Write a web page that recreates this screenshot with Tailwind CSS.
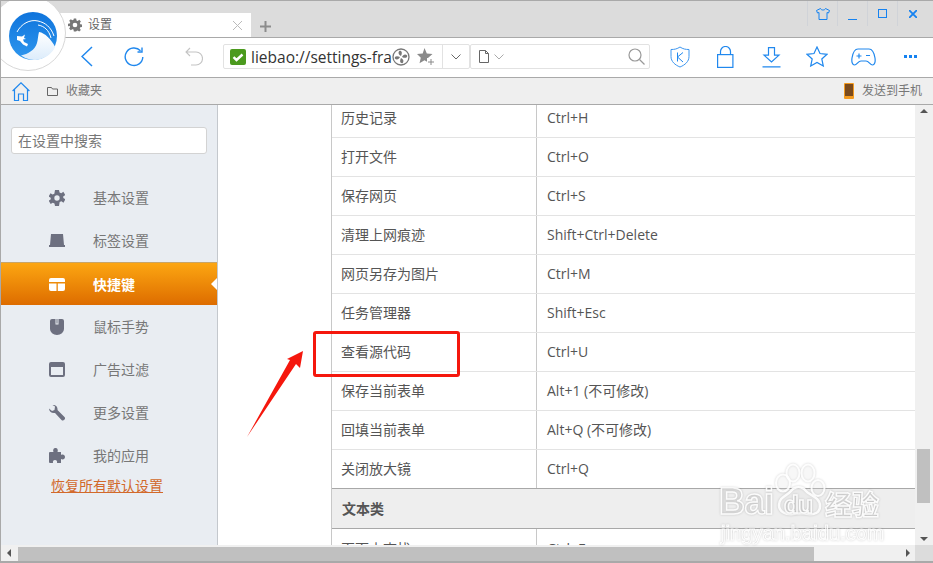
<!DOCTYPE html>
<html lang="zh"><head><meta charset="utf-8"><script src="https://cdn.jsdelivr.net/npm/@tailwindcss/browser@4"></script></head>
<body class="m-0 bg-white">
<div class="relative w-[933px] h-[563px] overflow-hidden flex flex-col border border-[#a9a9a9] border-r-0 border-b-2 text-[14px] text-[#555] font-['Open_Sans','Noto_Sans_CJK_SC',sans-serif]">
  <!-- tab strip -->
  <div class="h-[36px] shrink-0 bg-[#dcdcdc] flex items-end pl-[59px] relative">
    <div class="w-[191px] h-[24px] bg-white flex items-center pl-[8px] pr-[9px] gap-[6px] text-[#666] text-[12px]">
      <svg class="w-[14px] h-[14px]" viewBox="0 0 24 24" fill="#777"><path fill-rule="evenodd" d="M10 1h4l.6 3.200 2 .8L19.300 3.200l2.800 2.800-1.800 2.700.8 2 3 .6v4l-3.100.6-.8 2 1.800 2.600-2.800 2.800-2.700-1.800-2 .8L14 23h-4l-.6-3.100-2-.8-2.700 1.800-2.800-2.800 1.800-2.600-.8-2L0 14v-4l3-.6.8-2L2 4.800 4.800 2l2.700 1.800 2-.8zM12 8a4 4 0 100 8 4 4 0 000-8z"/></svg>
      <span class="flex-1">设置</span>
      <svg class="w-[9px] h-[9px]" viewBox="0 0 9 9" stroke="#bbb" stroke-width="1" fill="none"><path d="M0 0l9 9M9 0L0 9"/></svg>
    </div>
    <svg class="w-[11px] h-[11px] ml-[9px] mb-[5px]" viewBox="0 0 11 11" fill="#8c8c8c"><path d="M4.500 0h2v4.500H11v2H6.500V11h-2V6.500H0v-2h4.500z"/></svg>
    <div class="ml-auto self-start h-[25px] flex pr-[6px]">
      <div class="w-[30px] border-l border-[#d0d3d8] flex items-center justify-center"><svg class="w-[14px] h-[12px]" viewBox="0 0 14 12" fill="none" stroke="#1582f0"><path d="M4.500.5L.5 2.500l1 2.500 1.500-.5v7h8v-7l1.500.5 1-2.500-4-2c-.5 2-4.500 2-5 0z"/></svg></div>
      <div class="w-[30px] border-l border-[#d0d3d8] flex items-end justify-center pb-[6px]"><div class="w-[9px] h-[1px] bg-[#1582f0]"></div></div>
      <div class="w-[30px] border-l border-[#d0d3d8] flex items-center justify-center"><div class="w-[9px] h-[9px] border border-[#1582f0]"></div></div>
      <div class="w-[30px] border-l border-[#d0d3d8] flex items-center justify-center"><svg class="w-[8px] h-[8px]" viewBox="0 0 8 8" stroke="#1582f0" stroke-width="1.800"><path d="M0 0l8 8M8 0L0 8"/></svg></div>
    </div>
  </div>
  <!-- toolbar -->
  <div class="h-[40px] shrink-0 bg-white border-t border-[#a9a9a9] flex items-center relative">
    <svg class="absolute left-[80px] top-[8px] w-[12px] h-[21px]" viewBox="0 0 12 21" fill="none" stroke="#2088ee" stroke-width="1.500"><path d="M11 1L1 10.500 11 20"/></svg>
    <svg class="absolute left-[123px] top-[9px] w-[20px] h-[20px]" viewBox="0 0 20 20" fill="none" stroke="#2088ee" stroke-width="1.400"><path d="M16.500 3.800A8.800 8.800 0 1018.800 10"/><path d="M18 .5v4.500h-4.500"/></svg>
    <svg class="absolute left-[184px] top-[9px] w-[18px] h-[19px]" viewBox="0 0 18 19" fill="none" stroke="#c4c4c4" stroke-width="1.100"><path d="M5 1L1 5l4 4M1 5h10a6 6 0 010 13H6"/></svg>
    <div class="absolute left-[222px] top-[6px] w-[247px] h-[25px] border border-[#e2e2e2] rounded-[2px] flex items-center pl-[6px]">
      <svg class="w-[16px] h-[16px] shrink-0" viewBox="0 0 16 16"><rect width="16" height="16" rx="2" fill="#4b9a1e"/><path d="M3.500 8.200l3 2.800 6-5.500" fill="none" stroke="#fff" stroke-width="2.400"/></svg>
      <div class="ml-[5px] w-[141px] h-[24px] shrink-0 overflow-hidden whitespace-nowrap text-[15.5px] leading-[24px] text-[#333]">liebao://settings-fra</div>
      <svg class="w-[18px] h-[18px] shrink-0" viewBox="0 0 18 18" fill="none"><circle cx="9" cy="9" r="8" stroke="#777" stroke-width="1.300"/><path fill="#777" d="M9 8C7 7 5.500 5 7.500 2.800 10 2.500 10.500 5 9 8zM10 9c1-2 3-3.500 5.200-1.500.3 2.500-2.200 3-5.200 1.500zM9 10c2 1 3.500 3 1.500 5.200-2.500.3-3-2.200-1.500-5.200zM8 9c-1 2-3 3.500-5.200 1.500C2.500 8 5 7.500 8 9z"/></svg>
      <svg class="w-[18px] h-[17px] ml-[7px] shrink-0" viewBox="0 0 18 17"><path fill="#8a8a8a" d="M7.500 0l2.300 5.400 5.700.5-4.300 3.800 1.300 5.600-5-3-5 3 1.300-5.600L0 5.900l5.700-.5z"/><path fill="#fff" d="M10 10h8v7h-8z"/><path stroke="#8a8a8a" d="M14 11v6M11 14h6"/></svg>
      <div class="ml-auto w-[27px] self-stretch border-l border-[#e2e2e2] flex items-center justify-center"><svg class="w-[10px] h-[6px]" viewBox="0 0 10 6" fill="none" stroke="#666"><path d="M.5.500L5 5 9.500.5"/></svg></div>
    </div>
    <div class="absolute left-[469px] top-[6px] w-[180px] h-[25px] border border-[#e2e2e2] rounded-[2px] flex items-center pl-[8px]">
      <svg class="w-[10px] h-[13px]" viewBox="0 0 10 13" fill="none" stroke="#666"><path d="M.5.500h6l3 3v9h-9z M6.500.5v3h3"/></svg>
      <svg class="w-[10px] h-[6px] ml-[5px]" viewBox="0 0 10 6" fill="none" stroke="#aaa"><path d="M.5.500L5 5 9.500.5"/></svg>
      <svg class="w-[17px] h-[17px] ml-auto mr-[4px]" viewBox="0 0 17 17" fill="none" stroke="#999" stroke-width="1.200"><circle cx="7" cy="7" r="6"/><path d="M11.500 11.500L16.500 16.500"/></svg>
    </div>
    <svg class="absolute left-[669px] top-[8px] w-[20px] h-[22px]" viewBox="0 0 20 22" fill="none" stroke="#3c96f0"><path d="M10 1c3 2 5.500 2.500 9 2.500v7c0 5-4 8.500-9 10.500-5-2-9-5.500-9-10.500v-7C4.500 3.500 7 3 10 1z"/><path d="M7.500 6.500v9M13 6.500L7.500 11l5.500 5" stroke="#2088ee"/></svg>
    <svg class="absolute left-[716px] top-[8px] w-[17px] h-[22px]" viewBox="0 0 17 22" fill="none" stroke="#2088ee" stroke-width="1.200"><rect x=".6" y="8.600" width="15.300" height="12.800"/><path d="M3.500 8.500V5.500a5 5 0 0110 0v3"/></svg>
    <svg class="absolute left-[761px] top-[9px] w-[19px] h-[21px]" viewBox="0 0 19 21" fill="none" stroke="#2088ee" stroke-width="1.200"><path d="M6.500 .6h6v7.500h4.500L9.500 15 2 8.100h4.500zM.5 19.800h18"/></svg>
    <svg class="absolute left-[805px] top-[8px] w-[22px] h-[21px]" viewBox="0 0 22 21" fill="none" stroke="#2088ee" stroke-width="1.200"><path d="M11 1l3 6.500 7 .8-5.200 4.700 1.500 7L11 16.500 4.700 20l1.500-7L1 8.300l7-.8z"/></svg>
    <svg class="absolute left-[850px] top-[10px] w-[25px] h-[18px]" viewBox="0 0 25 18" fill="none" stroke="#2088ee" stroke-width="1.200"><path d="M7 1h11c3 0 5 3 6 9 .6 4-.5 7-2.500 7-2.500 0-3.500-4-6.500-4H10c-3 0-4 4-6.500 4C1.500 17 .4 14 1 10 2 4 4 1 7 1z"/><path d="M5.500 8h5M8 5.500v5M15 7.500h4"/></svg>
    <div class="absolute left-[903px] top-[17px] flex gap-[2px]"><div class="w-[3px] h-[3px] bg-[#1582f0]"></div><div class="w-[3px] h-[3px] bg-[#1582f0]"></div><div class="w-[3px] h-[3px] bg-[#1582f0]"></div></div>
  </div>
  <!-- bookmarks -->
  <div class="h-[28px] shrink-0 bg-[#efefef] border-t border-b border-[#a9a9a9] flex items-center pl-[11px] text-[12px] text-[#777]">
    <svg class="w-[18px] h-[19px]" viewBox="0 0 18 19" fill="none" stroke="#2088ee" stroke-width="1.200"><path d="M.6 9L9 .8 17.400 9M2.500 7.500v11h4v-6.500h5v6.500h4v-11"/></svg>
    <svg class="w-[11px] h-[9px] ml-[17px]" viewBox="0 0 11 9" fill="none" stroke="#666"><path d="M.5 8.500v-8h4l1 1.500h5v6.500z"/></svg>
    <span class="ml-[8px]">收藏夹</span>
    <svg class="w-[10px] h-[16px] ml-auto" viewBox="0 0 10 16"><rect width="10" height="16" rx="1" fill="#f39a1e"/><rect x="1" y="1" width="8" height="12" fill="#7a4a1c"/></svg>
    <span class="ml-[8px] mr-[11px]">发送到手机</span>
  </div>
  <!-- body -->
  <div class="flex-1 min-h-0 flex">
    <div class="w-[217px] shrink-0 bg-[#e9edf2] border-r border-[#c4c8cd] relative flex flex-col">
      <div class="mt-[22px] ml-[10px] w-[196px] h-[27px] bg-white border border-[#d3d3d3] rounded-[3px] flex items-center pl-[6px] text-[#777]">在设置中搜索</div>
      <nav class="mt-[22px] flex flex-col text-[#777]">
        <div class="h-[43px] flex items-center"><svg class="w-[16px] h-[16px] ml-[48px]" viewBox="0 0 24 24" fill="#6d7080"><path fill-rule="evenodd" d="M9 0h6l.8 3.600 2.600 1.100 3.100-2 3 5-3.200 2 .2 2.300 3.200 2-3 5-3.100-2-2.600 1.100L15 24H9l-.8-3.900-2.600-1.100-3.100 2-3-5 3.200-2-.2-2.300-3.200-2 3-5 3.100 2 2.600-1.100zM12 8a4 4 0 100 8 4 4 0 000-8z"/></svg><span class="ml-[28px]">基本设置</span></div>
        <div class="h-[43px] flex items-center"><svg class="w-[16px] h-[13px] ml-[48px]" viewBox="0 0 16 13" fill="#6d7080"><path d="M2 0h12l1 11h1v2H0v-2h1z"/></svg><span class="ml-[28px]">标签设置</span></div>
        <div class="h-[43px] flex items-center relative bg-gradient-to-b from-[#fca612] to-[#dd6c00] text-white font-bold border-t border-[#c9a566]"><svg class="w-[16px] h-[13px] ml-[48px]" viewBox="0 0 16 13" fill="#fff"><path d="M2 0h12a2 2 0 012 2v2H0V2a2 2 0 012-2zM0 5.500h7.500V13H2a2 2 0 01-2-2zM8.800 5.500H16V11a2 2 0 01-2 2H8.800z"/></svg><span class="ml-[28px]">快捷键</span><div class="absolute right-0 top-[15px] w-0 h-0 border-y-[6px] border-y-transparent border-r-[6px] border-r-white"></div></div>
        <div class="h-[43px] flex items-center"><svg class="w-[14px] h-[16px] ml-[49px]" viewBox="0 0 14 16" fill="#6d7080"><path fill-rule="evenodd" d="M2 0h3.500v5.500h3V0H12a2 2 0 012 2v8a7 6 0 01-14 0V2a2 2 0 012-2zM6.500 0h1v4.500h-1z"/></svg><span class="ml-[29px]">鼠标手势</span></div>
        <div class="h-[43px] flex items-center"><div class="w-[16px] h-[15px] ml-[48px] border-2 border-t-[5px] border-[#6d7080] rounded-[2px]"></div><span class="ml-[28px]">广告过滤</span></div>
        <div class="h-[43px] flex items-center"><svg class="w-[16px] h-[16px] ml-[48px]" viewBox="0 0 16 16" fill="#6d7080"><path d="M0 3.500L3 6l2.500-1L6 1.500 3.500 0C6 -.5 9 1.500 8.500 5L15.500 12c1 1 .5 2-.2 2.800-.8.900-2 1-2.800.1L6 8C2.500 8.500 0 6.500 0 3.500z"/></svg><span class="ml-[28px]">更多设置</span></div>
        <div class="h-[43px] flex items-center"><svg class="w-[16px] h-[15px] ml-[48px]" viewBox="0 0 16 15" fill="#6d7080"><path d="M1 4h3.500C3.500 1.500 5 0 6.500 0S9.500 1.500 8.500 4H12v3c2-1 4 0 4 2s-2 3-4 2v4H8c.5-2-.5-3-2-3s-2.500 1-2 3H1a1 1 0 01-1-1V5a1 1 0 011-1z"/></svg><span class="ml-[28px]">我的应用</span></div>
      </nav>
      <a class="ml-[50px] text-[#d2692a] underline leading-[18px]">恢复所有默认设置</a>
    </div>
    <div class="flex-1 min-w-0 bg-white overflow-hidden pl-[113px] pr-[18px]">
      <div class="-mt-[6px] border-l border-[#c8c8c8] text-[#555]">
        <div class="h-[39px] flex items-center border-b border-[#e3e3e3]"><div class="w-[205px] pl-[9px] pb-[2px] border-r border-[#c8c8c8] h-full flex items-center">历史记录</div><div class="pl-[10px] pb-[2px]">Ctrl+H</div></div>
        <div class="h-[39px] flex items-center border-b border-[#e3e3e3]"><div class="w-[205px] pl-[9px] pb-[2px] border-r border-[#c8c8c8] h-full flex items-center">打开文件</div><div class="pl-[10px] pb-[2px]">Ctrl+O</div></div>
        <div class="h-[39px] flex items-center border-b border-[#e3e3e3]"><div class="w-[205px] pl-[9px] pb-[2px] border-r border-[#c8c8c8] h-full flex items-center">保存网页</div><div class="pl-[10px] pb-[2px]">Ctrl+S</div></div>
        <div class="h-[39px] flex items-center border-b border-[#e3e3e3]"><div class="w-[205px] pl-[9px] pb-[2px] border-r border-[#c8c8c8] h-full flex items-center">清理上网痕迹</div><div class="pl-[10px] pb-[2px]">Shift+Ctrl+Delete</div></div>
        <div class="h-[39px] flex items-center border-b border-[#e3e3e3]"><div class="w-[205px] pl-[9px] pb-[2px] border-r border-[#c8c8c8] h-full flex items-center">网页另存为图片</div><div class="pl-[10px] pb-[2px]">Ctrl+M</div></div>
        <div class="h-[39px] flex items-center border-b border-[#e3e3e3]"><div class="w-[205px] pl-[9px] pb-[2px] border-r border-[#c8c8c8] h-full flex items-center">任务管理器</div><div class="pl-[10px] pb-[2px]">Shift+Esc</div></div>
        <div class="h-[39px] flex items-center border-b border-[#e3e3e3]"><div class="w-[205px] pl-[9px] pb-[2px] border-r border-[#c8c8c8] h-full flex items-center">查看源代码</div><div class="pl-[10px] pb-[2px]">Ctrl+U</div></div>
        <div class="h-[39px] flex items-center border-b border-[#e3e3e3]"><div class="w-[205px] pl-[9px] pb-[2px] border-r border-[#c8c8c8] h-full flex items-center">保存当前表单</div><div class="pl-[10px] pb-[2px]">Alt+1 (不可修改)</div></div>
        <div class="h-[39px] flex items-center border-b border-[#e3e3e3]"><div class="w-[205px] pl-[9px] pb-[2px] border-r border-[#c8c8c8] h-full flex items-center">回填当前表单</div><div class="pl-[10px] pb-[2px]">Alt+Q (不可修改)</div></div>
        <div class="h-[39px] flex items-center border-b border-[#a8a8a8]"><div class="w-[205px] pl-[9px] pb-[2px] border-r border-[#c8c8c8] h-full flex items-center">关闭放大镜</div><div class="pl-[10px] pb-[2px]">Ctrl+Q</div></div>
        <div class="h-[40px] flex items-center pl-[10px] bg-[#eeeeee] border-b border-[#a8a8a8] font-bold">文本类</div>
        <div class="h-[39px] flex items-center"><div class="w-[205px] pl-[9px] border-r border-[#c8c8c8] h-full flex items-center">页面内查找</div><div class="pl-[10px]">Ctrl+F</div></div>
      </div>
    </div>
  </div>
  <!-- vertical scrollbar -->
  <div class="absolute right-0 top-[104px] bottom-[16px] w-[18px] bg-[#f0f0f0]">
    <div class="absolute top-[4px] left-[5px] w-0 h-0 border-x-[4px] border-x-transparent border-b-[4px] border-b-[#555]"></div>
    <div class="absolute top-[344px] left-[2px] w-[13px] h-[54px] bg-[#c0c0c0]"></div>
    <div class="absolute bottom-[4px] left-[5px] w-0 h-0 border-x-[4px] border-x-transparent border-t-[4px] border-t-[#555]"></div>
  </div>
  <!-- horizontal scrollbar -->
  <div class="absolute left-0 right-0 bottom-0 h-[16px] bg-[#f0f0f0]">
    <div class="absolute left-[6px] top-[4px] w-0 h-0 border-y-[4px] border-y-transparent border-r-[4px] border-r-[#555]"></div>
    <div class="absolute left-[17px] top-[2px] w-[796px] h-[14px] bg-[#c0c0c0]"></div>
    <div class="absolute right-[23px] top-[4px] w-0 h-0 border-y-[4px] border-y-transparent border-l-[4px] border-l-[#555]"></div>
    <div class="absolute right-0 top-0 w-[18px] h-[16px] bg-[#dcdcdc]"></div>
  </div>
  <!-- logo badge -->
  <div class="absolute -left-[11px] -top-[6px] w-[76px] h-[76px] rounded-full bg-white border border-[#d8d8d8]"></div>
  <svg class="absolute left-[8px] top-[11px] w-[48px] h-[48px]" viewBox="0 0 48 48"><defs><linearGradient id="lg" x1="0" y1="0" x2="0" y2="1"><stop offset="0" stop-color="#0f74dc"/><stop offset="1" stop-color="#2f97ee"/></linearGradient><linearGradient id="pale" x1="0" y1="0" x2="0" y2="1"><stop offset="0" stop-color="#fff"/><stop offset="1" stop-color="#dcecfb"/></linearGradient></defs><circle cx="24" cy="24" r="24" fill="url(#lg)"/><path fill="url(#pale)" d="M30 20C36 21 42 27 46.200 35A22.800 22.800 0 0112 43.500C19 42 26 38 28 31 29 27 29 24 30 20z"/><path fill="none" stroke="#fff" stroke-width="1" d="M8 20C12 12 21 7 29 9 36 10.500 42 15 45 24"/><path fill="none" stroke="#fff" stroke-width="1" d="M29 13c6 1 11 5 13 13"/><path fill="#fff" d="M8 24l5 .5 3-2-1 3.500 2 1-3 .5 1 2.500 4 2-1 2.500-4-2-3-3.500-3-1z"/></svg>
  <!-- annotation -->
  <div class="absolute left-[312px] top-[330px] w-[147px] h-[46px] border-[3px] border-[#f5170d] rounded-[3px]"></div>
  <svg class="absolute left-[246px] top-[350px] w-[58px] h-[88px]" viewBox="0 0 58 88"><path fill="#f5170d" d="M0 86L43 9 40 8 56 0 53 17 49 13z"/></svg>
  <!-- watermark -->
  <svg class="absolute left-[770px] top-[462px] w-[56px] h-[56px] pointer-events-none drop-shadow-[0_0_1px_rgba(0,0,0,0.2)]" viewBox="0 0 56 56" fill="#fff" fill-opacity=".2" stroke="#fff" stroke-opacity=".9" stroke-width="2"><ellipse cx="12" cy="20" rx="7" ry="8.500"/><ellipse cx="22" cy="10" rx="6.500" ry="8.500"/><ellipse cx="37" cy="10" rx="6.500" ry="8.500"/><ellipse cx="47" cy="25" rx="6.500" ry="8"/><path d="M8 42c0-8 8-9 12-14 4-5 11-5 15 0 3 4 14 6 14 15 0 7-6 9-12 8-5-1-10-1-15 0-7 1-14-2-14-9z" stroke-width="2.500"/></svg>
  <div class="absolute left-[718px] top-[484px] h-[60px] w-[170px] text-black/5 font-bold font-['Liberation_Sans'] pointer-events-none drop-shadow-[0_0_1px_rgba(0,0,0,0.2)] [-webkit-text-stroke:1.500px_rgba(255,255,255,0.9)]">
    <span class="absolute left-[0px] top-[-3px] text-[36px] leading-[40px] tracking-[-0.500px]">Bai</span>
    <span class="absolute left-[65px] top-[7px] text-[24px] leading-[26px] tracking-[-0.500px]">du</span>
    <span class="absolute left-[106px] top-[3px] text-[27px] leading-[32px] font-['Noto_Sans_CJK_SC']">经验</span>
    <span class="absolute left-[2px] top-[36px] text-[20px] leading-[24px] font-normal tracking-[0.100px] [-webkit-text-stroke:1.200px_rgba(255,255,255,0.9)]">jingyan.baidu.com</span>
  </div>
</div>
</body></html>
